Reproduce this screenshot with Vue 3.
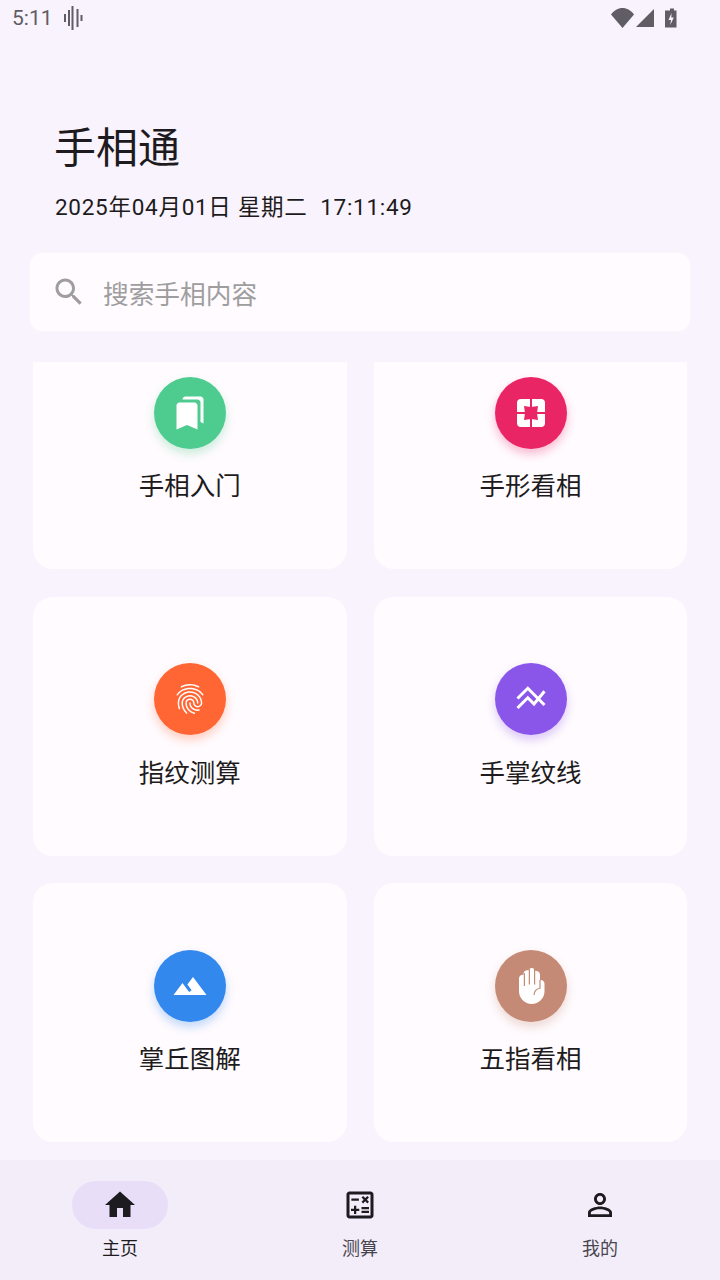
<script setup>
const cards = [
  { label: '手相入门', color: '#4ecb8f', shadow: 'rgba(78,203,143,.3)', icon: 'book' },
  { label: '手形看相', color: '#e92566', shadow: 'rgba(233,37,102,.3)', icon: 'shape' },
  { label: '指纹测算', color: '#ff6633', shadow: 'rgba(255,102,51,.3)', icon: 'finger' },
  { label: '手掌纹线', color: '#8a56ea', shadow: 'rgba(138,86,234,.3)', icon: 'lines' },
  { label: '掌丘图解', color: '#3388ee', shadow: 'rgba(51,136,238,.3)', icon: 'mount' },
  { label: '五指看相', color: '#c48a75', shadow: 'rgba(196,138,117,.3)', icon: 'hand' }
]
</script>

<template>
  <div class="page">
    <div class="status">
      <span class="time">5:11</span>
      <svg class="wave" width="22" height="24" viewBox="0 0 22 24">
        <path d="M2 8v8M6 4v16M9.5 0v24M14.5 3v18M18.5 9v6" stroke="#605d64" stroke-width="2" fill="none" />
      </svg>
      <span class="spacer"></span>
      <svg class="stat-icons" width="68" height="20" viewBox="0 0 68 20">
        <path d="M0 6.500C3 2.500 7 0 11.500 0S20 2.500 23 6.500L11.500 20z" fill="#605d64" />
        <path d="M43 1v18H25z" fill="#605d64" />
        <path d="M57 2.500h2.500V.5h4v2h2.500V19.500H54.500V2.500z" transform="translate(-.5 0)" fill="#605d64" />
        <path d="M60.500 5l-3 7h2.500l-.7 5 3.500-7.500h-2.500z" fill="#f8f3fd" />
      </svg>
    </div>

    <header class="head">
      <h1>手相通</h1>
      <p>2025年04月01日 星期二&nbsp;&nbsp;17:11:49</p>
    </header>

    <div class="search">
      <svg width="36" height="36" viewBox="0 0 24 24" fill="#9e9e9e">
        <path d="M15.500 14h-.79l-.28-.27C15.410 12.590 16 11.110 16 9.500 16 5.910 13.090 3 9.500 3S3 5.910 3 9.500 5.910 16 9.500 16c1.610 0 3.090-.59 4.230-1.570l.27.28v.79l5 4.990L20.490 19l-4.990-5zm-6 0C7.010 14 5 11.990 5 9.500S7.010 5 9.500 5 14 7.010 14 9.500 11.990 14 9.500 14z" />
      </svg>
      <span>搜索手相内容</span>
    </div>

    <main class="scroller">
      <div class="grid">
        <div v-for="c in cards" :key="c.label" class="card">
          <div class="circle" :style="{ background: c.color, boxShadow: `0 5px 10px ${c.shadow}` }">
            <svg v-if="c.icon === 'book'" width="36" height="36" viewBox="0 0 24 24" fill="#fff">
              <path d="M19 18l2 1V3c0-1.100-.9-2-2-2H8.990C7.890 1 7 1.900 7 3h10c1.100 0 2 .9 2 2v13zM15 5H5c-1.100 0-2 .9-2 2v16l7-3 7 3V7c0-1.100-.9-2-2-2z" />
            </svg>
            <svg v-else-if="c.icon === 'shape'" width="28" height="28" viewBox="0 0 28 28">
              <rect width="28" height="28" rx="4" fill="#fff" />
              <path d="M14 0v28M0 14h28" stroke="#e92566" stroke-width="2" />
              <path d="M7 7l7 1 7-1-1 7 1 7-7-1-7 1 1-7z" fill="#e92566" />
            </svg>
            <svg v-else-if="c.icon === 'finger'" width="36" height="36" viewBox="0 0 24 24" fill="#fff">
              <path d="M17.810 4.470c-.08 0-.16-.02-.23-.06C15.660 3.420 14 3 12.010 3c-1.980 0-3.860.47-5.570 1.410-.24.13-.54.04-.68-.2-.13-.24-.04-.55.2-.68C7.820 2.520 9.860 2 12.010 2c2.130 0 3.990.47 6.030 1.520.25.13.34.43.21.67-.09.18-.26.28-.44.28zM3.500 9.720c-.1 0-.2-.03-.29-.09-.23-.16-.28-.47-.12-.7.990-1.400 2.250-2.500 3.750-3.270C9.980 4.040 14 4.030 17.150 5.650c1.500.77 2.760 1.860 3.750 3.250.16.22.11.54-.12.7-.23.16-.54.11-.7-.12-.9-1.260-2.040-2.250-3.390-2.940-2.870-1.470-6.540-1.470-9.400.01-1.360.7-2.500 1.700-3.400 2.960-.08.14-.23.21-.39.21zm6.250 12.070c-.13 0-.26-.05-.35-.15-.87-.87-1.340-1.430-2.010-2.640-.69-1.230-1.050-2.730-1.050-4.340 0-2.970 2.540-5.390 5.660-5.390s5.660 2.420 5.660 5.390c0 .28-.22.5-.5.5s-.5-.22-.5-.5c0-2.420-2.090-4.390-4.660-4.390-2.570 0-4.660 1.970-4.660 4.390 0 1.440.32 2.770.93 3.850.64 1.150 1.080 1.640 1.850 2.420.19.2.19.51 0 .71-.11.1-.24.15-.37.15zm7.170-1.850c-1.190 0-2.240-.3-3.100-.89-1.490-1.010-2.380-2.650-2.380-4.390 0-.28.22-.5.5-.5s.5.22.5.5c0 1.410.72 2.740 1.940 3.560.71.48 1.540.71 2.540.71.24 0 .64-.03 1.040-.1.27-.05.53.13.58.41.05.27-.13.53-.41.58-.57.11-1.070.12-1.210.12zM14.910 22c-.04 0-.09-.01-.13-.02-1.590-.44-2.630-1.030-3.720-2.100-1.400-1.390-2.170-3.240-2.170-5.220 0-1.620 1.380-2.940 3.080-2.940 1.700 0 3.080 1.320 3.080 2.940 0 1.070.93 1.940 2.080 1.940s2.080-.87 2.080-1.940c0-3.770-3.250-6.830-7.250-6.830-2.840 0-5.440 1.580-6.610 4.030-.39.81-.59 1.760-.59 2.800 0 .78.07 2.010.67 3.610.1.26-.03.55-.29.64-.26.1-.55-.04-.64-.29-.49-1.310-.73-2.610-.73-3.960 0-1.200.23-2.290.68-3.240 1.330-2.790 4.280-4.600 7.510-4.600 4.550 0 8.250 3.510 8.250 7.830 0 1.620-1.380 2.940-3.080 2.940s-3.080-1.320-3.080-2.940c0-1.070-.93-1.940-2.080-1.940s-2.080.87-2.080 1.940c0 1.710.66 3.310 1.870 4.510.95.94 1.860 1.460 3.270 1.850.27.07.42.35.35.61-.05.23-.26.38-.47.38z" />
            </svg>
            <svg v-else-if="c.icon === 'lines'" width="36" height="36" viewBox="0 0 36 36" fill="none" stroke="#fff" stroke-width="3">
              <path d="M4.500 17.500L14.800 7.300 31.500 24" />
              <path d="M4.500 27L14.800 16.800 21 23 31.500 10.300" />
            </svg>
            <svg v-else-if="c.icon === 'mount'" width="36" height="36" viewBox="0 0 24 24" fill="#fff">
              <path d="M14 6l-3.750 5 2.850 3.800-1.600 1.200C9.810 13.750 7 10 7 10l-6 8h22L14 6z" />
            </svg>
            <svg v-else width="36" height="36" viewBox="0 0 24 24">
              <path fill="#fff" d="M18.500 8c-.17 0-.34.02-.5.05V4.500C18 3.120 16.880 2 15.500 2c-.19 0-.37.02-.54.06C14.750.89 13.720 0 12.500 0c-1.060 0-1.960.66-2.330 1.590C9.960 1.530 9.730 1.500 9.500 1.500 8.120 1.500 7 2.620 7 4v.55C6.840 4.520 6.670 4.500 6.500 4.500 5.120 4.500 4 5.620 4 7v8.500C4 20.190 7.810 24 12.500 24S21 20.190 21 15.500v-5C21 9.120 19.880 8 18.500 8z" />
              <path fill="none" stroke="#c48a75" stroke-width=".8" d="M7.600 3.500V12M10.900 .5V11M14.400 .5V11M14 18c0-2.300 1.700-4.300 4-4.500V8" />
            </svg>
          </div>
          <div class="label">{{ c.label }}</div>
        </div>
      </div>
    </main>

    <nav class="nav">
      <div class="tab active">
        <div class="pill">
          <svg width="36" height="36" viewBox="0 0 24 24" fill="#1d1b20"><path d="M10 20v-6h4v6h5v-8h3L12 3 2 12h3v8z" /></svg>
        </div>
        <span>主页</span>
      </div>
      <div class="tab">
        <div class="pill">
          <svg width="36" height="36" viewBox="0 0 24 24" fill="#1d1b20"><path d="M19 3H5c-1.100 0-2 .9-2 2v14c0 1.100.9 2 2 2h14c1.100 0 2-.9 2-2V5c0-1.100-.9-2-2-2zm0 16H5V5h14v14zM6.250 7.720h5v1.500h-5zM13 15.750h5v1.500h-5zm0-2.500h5v1.500h-5zM8 18h1.500v-2h2v-1.500h-2v-2H8v2H6V16h2zm6.090-7.050l1.410-1.410 1.410 1.410 1.060-1.060-1.410-1.420 1.410-1.410L16.910 6 15.500 7.410 14.090 6l-1.060 1.060 1.410 1.410-1.410 1.420z" /></svg>
        </div>
        <span>测算</span>
      </div>
      <div class="tab">
        <div class="pill">
          <svg width="36" height="36" viewBox="0 0 24 24" fill="#1d1b20"><path d="M12 5.900c1.160 0 2.100.94 2.100 2.100s-.94 2.100-2.100 2.100S9.900 9.160 9.900 8s.94-2.100 2.100-2.100m0 9c2.970 0 6.100 1.460 6.100 2.100v1.100H5.900V17c0-.64 3.130-2.100 6.100-2.100M12 4C9.790 4 8 5.790 8 8s1.790 4 4 4 4-1.790 4-4-1.790-4-4-4zm0 9c-2.670 0-8 1.340-8 4v3h16v-3c0-2.660-5.330-4-8-4z" /></svg>
        </div>
        <span>我的</span>
      </div>
    </nav>
  </div>
</template>

<style scoped>
.page {
  width: 720px;
  height: 1280px;
  display: flex;
  flex-direction: column;
  overflow: hidden;
  background: #f8f3fd;
  font-family: Roboto, "Noto Sans CJK SC", sans-serif;
  color: #1d1b20;
}
.status {
  height: 36px;
  flex: none;
  display: flex;
  align-items: center;
  padding: 0 41px 0 12px;
  color: #605d64;
}
.time { font-size: 21px; line-height: 36px; }
.wave { margin-left: 10px; }
.spacer { flex: 1; }
.stat-icons { margin-top: -1px; }
.head {
  padding: 84px 55px 0 54px;
  flex: none;
  height: 217px;
  box-sizing: border-box;
}
.head h1 {
  margin: 0;
  font-size: 42px;
  font-weight: 400;
  line-height: 58px;
}
.head p {
  margin: 11px 0 0 1px;
  font-size: 22.500px;
  line-height: 36px;
  letter-spacing: .72px;
}
.search {
  flex: none;
  margin: 0 30px;
  height: 78px;
  box-sizing: border-box;
  border-radius: 12px;
  background: #fffbfe;
  padding-left: 21px;
  display: flex;
  align-items: center;
  gap: 16px;
  color: #9e9e9e;
  font-size: 25.700px;
}
.scroller {
  flex: 1;
  min-height: 0;
  margin-top: 31px;
  overflow: hidden;
}
.grid {
  margin-top: -51.750px;
  padding: 0 33px;
  display: grid;
  grid-template-columns: 313.500px 313px;
  column-gap: 27.500px;
  row-gap: 27.500px;
}
.card {
  height: 259px;
  box-sizing: border-box;
  border-radius: 20px;
  background: #fffbfe;
  padding-top: 66.250px;
  display: flex;
  flex-direction: column;
  align-items: center;
}
.circle {
  width: 72px;
  height: 72px;
  flex: none;
  border-radius: 50%;
  display: flex;
  align-items: center;
  justify-content: center;
}
.label {
  margin-top: 19.500px;
  font-size: 25.500px;
  line-height: 36px;
}
.nav {
  flex: none;
  height: 120px;
  background: #f3edf9;
  display: grid;
  grid-template-columns: repeat(3, 1fr);
}
.tab {
  display: flex;
  flex-direction: column;
  align-items: center;
  padding-top: 21px;
  font-size: 18px;
  color: #49454f;
}
.tab.active { color: #1d1b20; }
.pill {
  width: 96px;
  height: 48px;
  border-radius: 24px;
  display: flex;
  align-items: center;
  justify-content: center;
}
.active .pill { background: #e8def8; }
.tab span {
  margin-top: 7px;
  line-height: 26px;
}
</style>

<style>
html, body { margin: 0; background: #f8f3fd; }
</style>
